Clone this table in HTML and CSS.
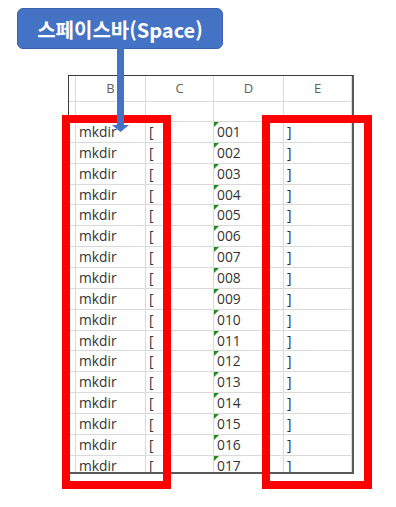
FILE: index.html
```html
<!DOCTYPE html>
<html lang="ko">
<head>
<meta charset="utf-8">
<title>스페이스바</title>
<link rel="stylesheet" href="styles.css">
</head>
<body>
<div class="page">
  <div class="sheet">
    <div class="grid">
      <div class="hd"></div><div class="hd">B</div><div class="hd">C</div><div class="hd">D</div><div class="hd">E</div>
      <div class="c"></div><div class="c"></div><div class="c"></div><div class="c"></div><div class="c"></div>
      <div class="c"></div><div class="c">mkdir</div><div class="c">[</div><div class="c t">001</div><div class="c">]</div>
      <div class="c"></div><div class="c">mkdir</div><div class="c">[</div><div class="c t">002</div><div class="c">]</div>
      <div class="c"></div><div class="c">mkdir</div><div class="c">[</div><div class="c t">003</div><div class="c">]</div>
      <div class="c"></div><div class="c">mkdir</div><div class="c">[</div><div class="c t">004</div><div class="c">]</div>
      <div class="c"></div><div class="c">mkdir</div><div class="c">[</div><div class="c t">005</div><div class="c">]</div>
      <div class="c"></div><div class="c">mkdir</div><div class="c">[</div><div class="c t">006</div><div class="c">]</div>
      <div class="c"></div><div class="c">mkdir</div><div class="c">[</div><div class="c t">007</div><div class="c">]</div>
      <div class="c"></div><div class="c">mkdir</div><div class="c">[</div><div class="c t">008</div><div class="c">]</div>
      <div class="c"></div><div class="c">mkdir</div><div class="c">[</div><div class="c t">009</div><div class="c">]</div>
      <div class="c"></div><div class="c">mkdir</div><div class="c">[</div><div class="c t">010</div><div class="c">]</div>
      <div class="c"></div><div class="c">mkdir</div><div class="c">[</div><div class="c t">011</div><div class="c">]</div>
      <div class="c"></div><div class="c">mkdir</div><div class="c">[</div><div class="c t">012</div><div class="c">]</div>
      <div class="c"></div><div class="c">mkdir</div><div class="c">[</div><div class="c t">013</div><div class="c">]</div>
      <div class="c"></div><div class="c">mkdir</div><div class="c">[</div><div class="c t">014</div><div class="c">]</div>
      <div class="c"></div><div class="c">mkdir</div><div class="c">[</div><div class="c t">015</div><div class="c">]</div>
      <div class="c"></div><div class="c">mkdir</div><div class="c">[</div><div class="c t">016</div><div class="c">]</div>
      <div class="c"></div><div class="c">mkdir</div><div class="c">[</div><div class="c t">017</div><div class="c">]</div>
    </div>
  </div>
</div>
<div class="redbox left"></div>
<div class="redbox right"></div>
<div class="callout">스페이스바(Space)</div>
<svg class="arrow" width="22" height="90" viewBox="0 0 22 90">
  <rect x="7" y="0" width="7" height="79" fill="#4472c4"/>
  <polygon points="2,78 19,78 10.5,85" fill="#4472c4"/>
</svg>
</body>
</html>
```
FILE: styles.css
```css
html, body {
  margin: 0;
  padding: 0;
  background: #ffffff;
}
body {
  position: relative;
  width: 396px;
  height: 507px;
  overflow: hidden;
  font-family: "Open Sans", "Noto Sans CJK KR", sans-serif;
}
.page {
  padding: 75px 0 0 68px;
}
.sheet {
  width: 283px;
  height: 396px;
  border-top: 1px solid #3c3c3c;
  border-left: 1px solid #3c3c3c;
  border-right: 2px solid #5a5a5a;
  border-bottom: 2px solid #5a5a5a;
  overflow: hidden;
}
.grid {
  display: grid;
  grid-template-columns: 7px 70px 68px 70px 68px;
  grid-template-rows: 26px 20px;
  grid-auto-rows: 20.86px;
}
.hd, .c {
  box-sizing: border-box;
  border-right: 1px solid #dadada;
  border-bottom: 1px solid #dadada;
}
.hd {
  text-align: center;
  font-size: 13px;
  line-height: 24px;
  color: #606060;
}
.c {
  position: relative;
  font-size: 13.8px;
  line-height: 20px;
  padding-left: 3px;
  color: #333333;
  white-space: nowrap;
}
.t::before {
  content: "";
  position: absolute;
  top: 0;
  left: 0;
  border-top: 5px solid #1f8a1f;
  border-right: 5px solid transparent;
}
.redbox {
  position: absolute;
  top: 115px;
  height: 358px;
  border: 8px solid #ff0000;
}
.redbox.left {
  left: 62px;
  width: 93px;
}
.redbox.right {
  left: 262px;
  width: 94px;
}
.callout {
  position: absolute;
  left: 17px;
  top: 8px;
  width: 204px;
  height: 39px;
  box-sizing: content-box;
  background: #4472c4;
  border: 1px solid #3a62ad;
  border-radius: 6px;
  color: #ffffff;
  font-family: "Noto Sans CJK KR", "Noto Sans", sans-serif;
  font-weight: 700;
  font-size: 20px;
  line-height: 41px;
  text-align: center;
  letter-spacing: 0;
}
.arrow {
  position: absolute;
  left: 110px;
  top: 47px;
}
```
